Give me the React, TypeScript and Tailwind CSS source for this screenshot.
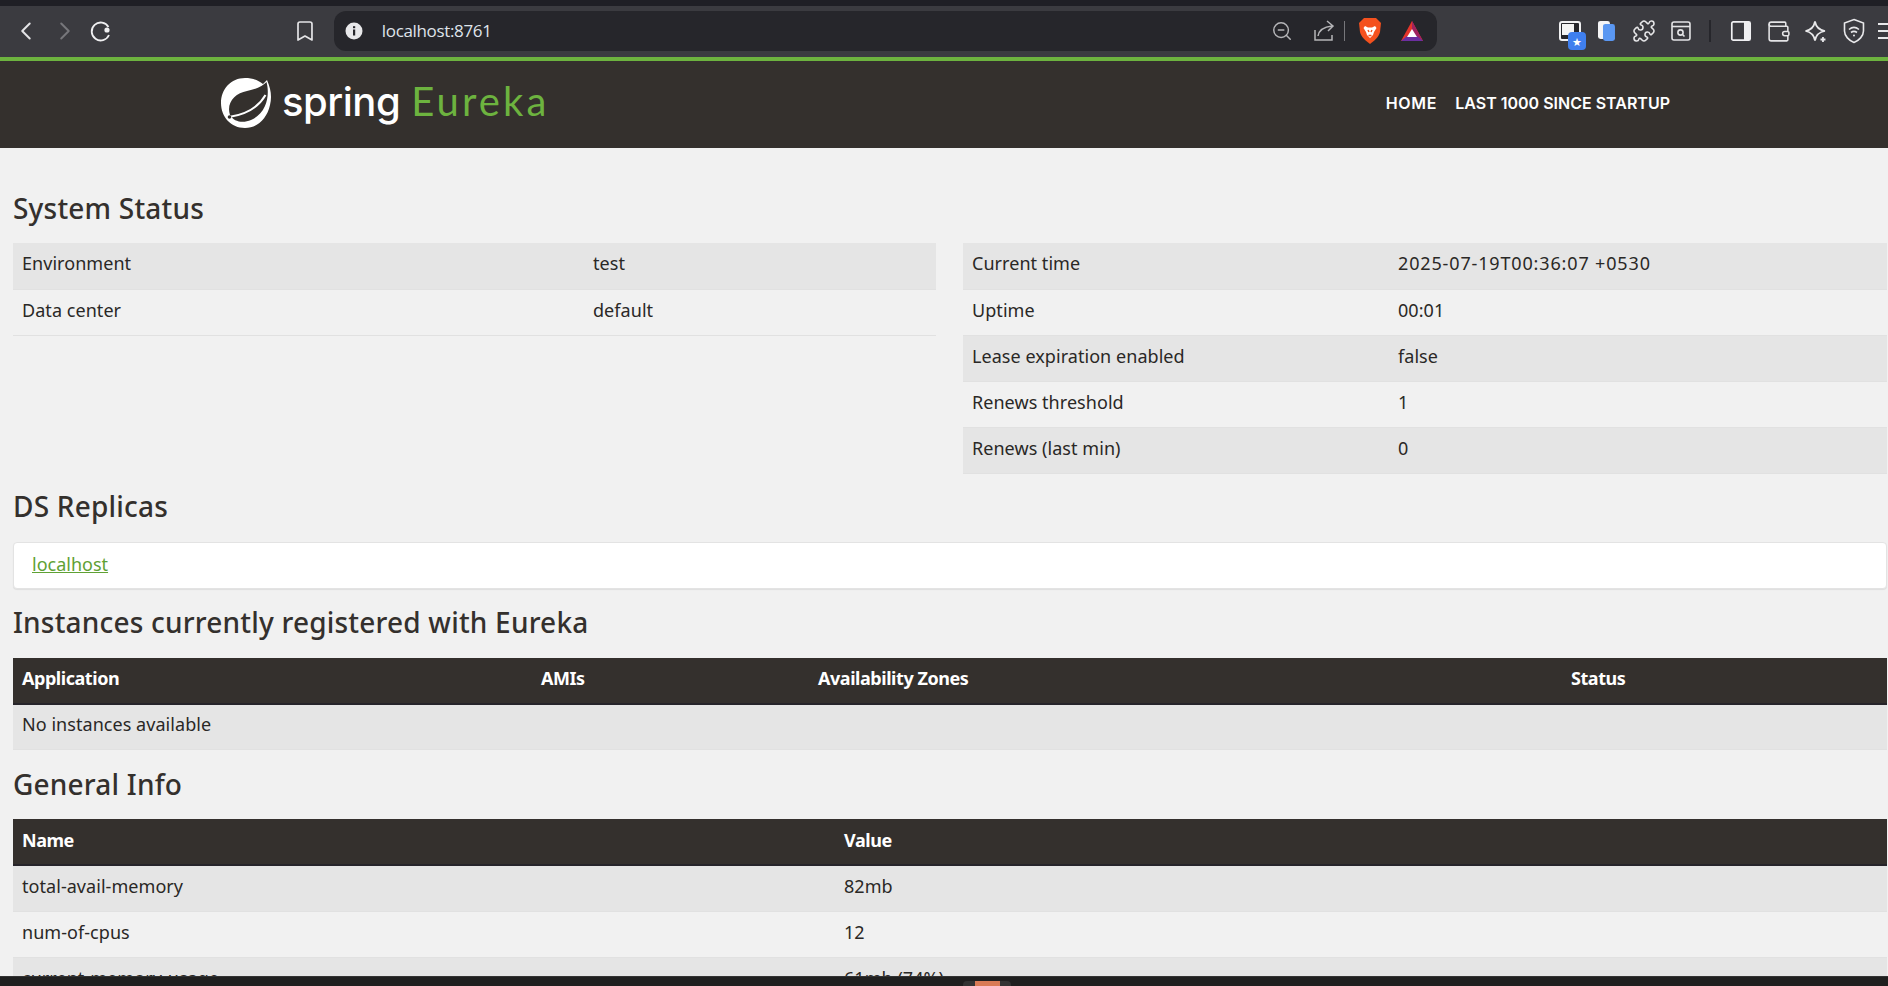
import React from "react";
import { ChevronLeft, ChevronRight, Bookmark, ZoomOut, Puzzle, Wallet } from "lucide-react";

const Row = ({ cells, odd, widths }: { cells: React.ReactNode[]; odd: boolean; widths: string[] }) => (
  <tr className={`h-[46px] border-b border-[#e1e1e1] ${odd ? "bg-[#e5e5e5]" : "bg-[#f1f1f1]"}`}>
    {cells.map((c, i) => (
      <td key={i} className={`px-[9px] pt-0 pb-[4px] align-middle tracking-[0.05px] ${widths[i]}`}>{c}</td>
    ))}
  </tr>
);

const Table = ({ head, rows, widths }: { head?: string[]; rows: React.ReactNode[][]; widths: string[] }) => (
  <table className="w-full table-fixed border-collapse">
    {head && (
      <thead>
        <tr className="h-[46px] bg-[#34302d] border-b-2 border-[#26242a] text-white">
          {head.map((h, i) => (
            <th key={i} className={`px-[9px] pt-0 pb-[3px] text-left font-bold tracking-[-0.45px] ${widths[i]}`}>{h}</th>
          ))}
        </tr>
      </thead>
    )}
    <tbody>
      {rows.map((r, i) => (
        <Row key={i} cells={r} odd={i % 2 === 0} widths={widths} />
      ))}
    </tbody>
  </table>
);

const Heading = ({ children, className }: { children: React.ReactNode; className: string }) => (
  <h2 className={`h-10 leading-10 text-[28px] font-medium text-[#34302d] tracking-[0.2px] ${className}`}>{children}</h2>
);

const LeafLogo = () => (
  <svg width="52" height="52" viewBox="0 0 52 52" className="shrink-0 mb-[1px]">
    <path d="M25 1 C32 1 38 3 43 7 L47 3 C51 12 52 20 50 28 C47 42 37 51 25 51 C11 51 1 40 1 26 C1 12 11 1 25 1Z" fill="#fff" />
    <path d="M10 38 C6 26 15 16 27 14 C36 12.5 43 9 46.5 5 C50 18 47 36 31 43 C23 46.5 14 45 10 38Z" fill="#34302d" />
    <path d="M9 40 C22 38 37 33 45.5 18" stroke="#fff" strokeWidth="2" fill="none" />
    <circle cx="9.5" cy="40" r="1.8" fill="#34302d" />
  </svg>
);

const Brave = () => (
  <svg width="24" height="28" viewBox="0 0 24 28">
    <path d="M6 1 H18 L21 4 L23 6 L22 15 C21 20 16 24 12 27 C8 24 3 20 2 15 L1 6 L3 4Z" fill="#f4511e" />
    <path d="M7 9 L10 10.5 H14 L17 9 L18.5 11 L16 15 L15 18 L12 21 L9 18 L8 15 L5.5 11Z" fill="#fff" />
    <path d="M10 13 L11 15 M14 13 L13 15 M10.5 18.5 H13.5" stroke="#f4511e" strokeWidth="1.4" />
  </svg>
);

const Bat = () => (
  <svg width="24" height="24" viewBox="0 0 24 24">
    <path d="M12 2 L23 22 H1Z" fill="#e5352b" />
    <path d="M12 2 L23 22 H17 L12 13Z" fill="#a0235f" />
    <path d="M1 22 L7 17 H17 L23 22Z" fill="#6b2fa0" />
    <path d="M12 10 L17 18 H7Z" fill="#fff" />
  </svg>
);

const icon = "text-[#e4e4e6]";

export default function App() {
  return (
    <div className="w-[1888px] h-[986px] overflow-hidden flex flex-col bg-[#f1f1f1] font-['Noto_Sans',sans-serif] text-[18px] text-[#2a2826]">
      <div className="h-[6px] shrink-0 bg-[#1f1f25]" />
      {/* browser toolbar */}
      <div className="h-[51px] pb-px shrink-0 bg-[#3b3b40] flex items-center">
        <ChevronLeft size={30} strokeWidth={1.6} className={`ml-[11px] ${icon}`} />
        <ChevronRight size={30} strokeWidth={1.6} className="ml-[9px] text-[#77777b]" />
        <svg width="24" height="24" viewBox="0 0 24 24" fill="none" className="ml-[9px]">
          <path d="M19.5 8 A9 9 0 1 0 20 16" stroke="#f0f0f2" strokeWidth="1.8" />
          <circle cx="18" cy="11" r="2.6" fill="#f0f0f2" />
        </svg>
        <Bookmark size={24} strokeWidth={1.7} className={`ml-[180px] ${icon}`} />
        <div className="ml-[17px] w-[1105px] h-10 rounded-xl bg-[#26262b] flex items-center text-[#dfe3ea]">
          <svg width="18" height="18" viewBox="0 0 18 18" className="ml-[11px]">
            <circle cx="9" cy="9" r="8.5" fill="#e8e8ea" />
            <rect x="8" y="7.5" width="2.2" height="6" fill="#26262b" />
            <rect x="8" y="4.2" width="2.2" height="2" fill="#26262b" />
          </svg>
          <span className="ml-[19px] text-[17px] font-['Open_Sans',sans-serif] tracking-[-0.35px]">localhost:8761</span>
          <div className="flex-1" />
          <ZoomOut size={22} strokeWidth={1.6} className="text-[#b5b5b8]" />
          <svg width="24" height="24" viewBox="0 0 24 24" fill="none" stroke="#b5b5b8" strokeWidth="1.5" className="ml-[19px]">
            <path d="M3 11 V21 H20 V16" />
            <path d="M6 17 C7 11 11 8 20 7 M15 2 L21 7 L16 12" />
          </svg>
          <div className="ml-[8px] w-px h-5 bg-[#77777b]" />
          <div className="ml-[13px]"><Brave /></div>
          <div className="ml-[18px] mr-[13px]"><Bat /></div>
        </div>
        <div className="relative ml-[122px] w-[22px] h-[20px] border-2 border-[#f0f0f2] rounded-[3px] bg-[#26262b] p-px">
          <div className="w-[12px] h-[11px] bg-[#f4f4f4]" />
          <div className="absolute left-[7px] top-[9px] w-[18px] h-[18px] rounded-[4px] bg-[#3f7fee] flex items-center justify-center text-white text-[11px] leading-none">★</div>
        </div>
        <svg width="20" height="22" viewBox="0 0 20 22" className="ml-[15px]">
          <rect x="2" y="1" width="12" height="18" rx="2.5" fill="#f4f4f6" />
          <rect x="7" y="4" width="12" height="17" rx="2.5" fill="#5a97f2" />
        </svg>
        <Puzzle size={24} strokeWidth={1.6} className={`ml-[16px] ${icon}`} />
        <svg width="24" height="24" viewBox="0 0 24 24" fill="none" stroke="#e4e4e6" strokeWidth="1.6" className="ml-[13px]">
          <rect x="3" y="3" width="18" height="18" rx="2" />
          <path d="M3 7.5 H21" />
          <circle cx="11.5" cy="13.5" r="2.6" />
          <path d="M13.5 15.5 L15.5 17.5" />
        </svg>
        <div className="ml-[16px] w-[2px] h-[22px] bg-[#26262b]" />
        <svg width="24" height="24" viewBox="0 0 24 24" className="ml-[18px]">
          <rect x="2.8" y="2.8" width="18.4" height="18.4" rx="1.5" fill="none" stroke="#f0f0f2" strokeWidth="1.7" />
          <rect x="15" y="3" width="6" height="18" fill="#f0f0f2" />
        </svg>
        <Wallet size={25} strokeWidth={1.5} className={`ml-[13px] ${icon}`} />
        <svg width="24" height="24" viewBox="0 0 24 24" fill="none" stroke="#e8e8ea" strokeWidth="1.7" className="ml-[13px]">
          <path d="M11 2.5 C12 8 15 11 21 12 C15 13 12 16 11 21.5 C10 16 7 13 1.5 12 C7 11 10 8 11 2.5Z" />
          <path d="M19 18 V23 M16.5 20.5 H21.5" strokeWidth="1.8" />
        </svg>
        <svg width="24" height="26" viewBox="0 0 24 26" fill="none" stroke="#e8e8ea" strokeWidth="1.6" className="ml-[14px]">
          <path d="M12 1.5 L21.5 5 V13 C21.5 18 17 22.5 12 24.5 C7 22.5 2.5 18 2.5 13 V5Z" />
          <path d="M7 11.5 C10 9 14 9 17 11.5 M9 14.5 C11 13 13 13 15 14.5" />
          <circle cx="12" cy="17.5" r="1" fill="#e8e8ea" stroke="none" />
        </svg>
        <div className="ml-[12px] flex flex-col gap-[5px]">
          <div className="w-[10px] h-[2px] bg-[#e8e8ea]" />
          <div className="w-[10px] h-[2px] bg-[#e8e8ea]" />
          <div className="w-[10px] h-[2px] bg-[#e8e8ea]" />
        </div>
      </div>

      {/* page */}
      <div className="flex-1 min-h-0 overflow-hidden">
        <nav className="h-[91px] pb-[3px] border-t-4 border-[#6db33f] bg-[#34302d] flex items-center pl-[220px]">
          <LeafLogo />
          <span className="ml-[10px] mb-[3px] text-[40px] leading-none font-['Inter',sans-serif] font-medium text-white tracking-[-0.5px]">spring</span>
          <span className="ml-[11px] mb-[4px] text-[40px] leading-none font-['Lato',sans-serif] text-[#6db33f] tracking-[3.1px]">Eureka</span>
          <div className="flex-1" />
          <span className="text-white text-[16px] font-semibold font-['Inter',sans-serif] tracking-[0.7px]">HOME</span>
          <span className="ml-[18px] mr-[218px] text-white text-[16px] font-semibold font-['Inter',sans-serif] tracking-[0px]">LAST 1000 SINCE STARTUP</span>
        </nav>

        <main className="pl-[13px] pr-px pt-10">
          <Heading className="mb-[15px]">System Status</Heading>
          <div className="grid grid-cols-[923px_924px] gap-x-[27px] items-start">
            <Table widths={["w-[571px]", ""]} rows={[["Environment", "test"], ["Data center", "default"]]} />
            <Table
              widths={["w-[426px]", ""]}
              rows={[
                ["Current time", <span className="tracking-[0.85px]">2025-07-19T00:36:07 +0530</span>],
                ["Uptime", "00:01"],
                ["Lease expiration enabled", "false"],
                ["Renews threshold", "1"],
                ["Renews (last min)", "0"],
              ]}
            />
          </div>

          <Heading className="mt-[12px] mb-[16px]">DS Replicas</Heading>
          <div className="h-[47px] pb-[2px] rounded border border-[#e3e3e3] bg-white flex items-center pl-[18px] shadow-[0_1px_1px_rgba(0,0,0,0.08)]">
            <a href="#" className="text-[#5fa134] underline">localhost</a>
          </div>

          <Heading className="mt-[13px] mb-[16px]">Instances currently registered with Eureka</Heading>
          <Table
            widths={["w-[519px]", "w-[277px]", "w-[753px]", ""]}
            head={["Application", "AMIs", "Availability Zones", "Status"]}
            rows={[["No instances available", "", "", ""]]}
          />

          <Heading className="mt-[14px] mb-[15px]">General Info</Heading>
          <Table
            widths={["w-[822px]", ""]}
            head={["Name", "Value"]}
            rows={[["total-avail-memory", "82mb"], ["num-of-cpus", "12"], ["current-memory-usage", "61mb (74%)"]]}
          />
        </main>
      </div>

      {/* bottom bar */}
      <div className="h-[10px] shrink-0 bg-[#1f1f1f] border-t border-[#333] flex justify-start">
        <div className="ml-[963px] w-[48px] h-[9px] mt-[4px] rounded-t-[4px] bg-[#333] flex justify-center">
          <div className="w-[25px] bg-[#d97a55]" />
        </div>
      </div>
    </div>
  );
}
